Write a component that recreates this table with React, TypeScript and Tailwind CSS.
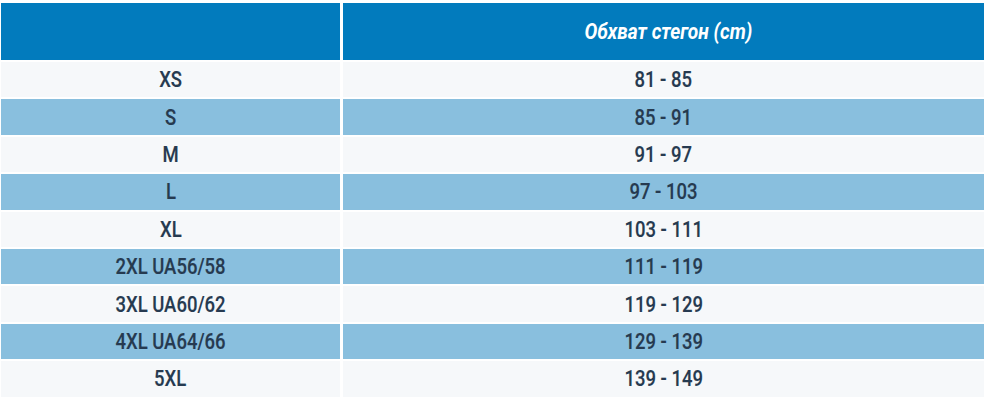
import React from "react";

const rows: [string, string][] = [
  ["XS", "81 - 85"],
  ["S", "85 - 91"],
  ["M", "91 - 97"],
  ["L", "97 - 103"],
  ["XL", "103 - 111"],
  ["2XL UA56/58", "111 - 119"],
  ["3XL UA60/62", "119 - 129"],
  ["4XL UA64/66", "129 - 139"],
  ["5XL", "139 - 149"],
];

const App: React.FC = () => {
  return (
    <div
      className="w-[984px] h-[408px] bg-white pt-[3px] pl-[1px]"
      style={{ fontFamily: "Roboto, 'Liberation Sans', sans-serif" }}
    >
      <div className="grid grid-cols-[339px_1fr] gap-x-[3px] gap-y-[2px]">
        <div className="h-[57px] bg-[#027bbd]" />
        <div className="h-[57px] bg-[#027bbd] flex items-center justify-center pl-[10px]">
          <span className="text-white text-[22px] font-bold italic scale-x-[0.87]">
            Обхват стегон (cm)
          </span>
        </div>
        {rows.map(([size, range], i) => {
          const bg = i % 2 === 1 ? "bg-[#89bfde]" : "bg-[#f6f8fa]";
          return (
            <React.Fragment key={size}>
              <div className={`h-[35.4px] ${bg} flex items-center justify-center`}>
                <span className="text-[22px] font-medium text-[#263a50] scale-x-[0.84] [-webkit-text-stroke:0.15px_#263a50]">
                  {size}
                </span>
              </div>
              <div className={`h-[35.4px] ${bg} flex items-center justify-center`}>
                <span className="text-[22px] font-medium text-[#263a50] scale-x-[0.84] [-webkit-text-stroke:0.15px_#263a50]">
                  {range}
                </span>
              </div>
            </React.Fragment>
          );
        })}
      </div>
    </div>
  );
};

export default App;
